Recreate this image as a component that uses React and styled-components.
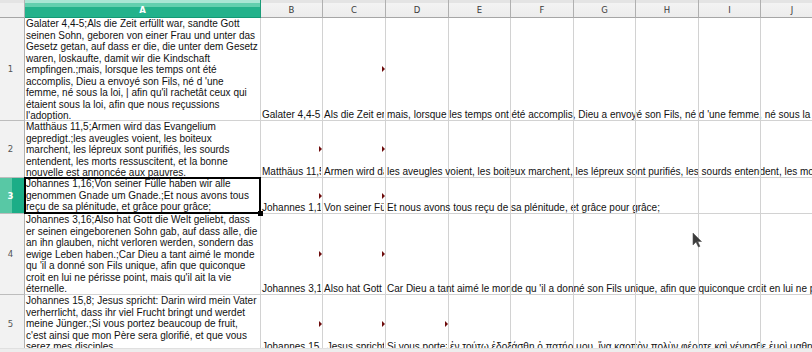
import React from "react";
import styled, { createGlobalStyle, css } from "styled-components";

const Global = createGlobalStyle`
  html, body { margin: 0; padding: 0; background: #fff; overflow: hidden; }
  #root { width: 812px; height: 352px; }
`;

const COLS = [
  { key: "A", w: 236 },
  { key: "B", w: 62 },
  { key: "C", w: 63 },
  { key: "D", w: 63 },
  { key: "E", w: 62 },
  { key: "F", w: 63 },
  { key: "G", w: 62 },
  { key: "H", w: 63 },
  { key: "I", w: 62 },
  { key: "J", w: 63 },
];

const ROWS = [
  {
    n: 1,
    h: 103,
    lines: [
      "Galater 4,4-5;Als die Zeit erfüllt war, sandte Gott",
      "seinen Sohn, geboren von einer Frau und unter das",
      "Gesetz getan, auf dass er die, die unter dem Gesetz",
      "waren, loskaufte, damit wir die Kindschaft",
      "empfingen.;mais, lorsque les temps ont été",
      "accomplis, Dieu a envoyé son Fils, né d 'une",
      "femme, né sous la loi, | afin qu'il rachetât ceux qui",
      "étaient sous la loi, afin que nous reçussions",
      "l'adoption.",
    ],
    cells: {
      B: "Galater 4,4-5",
      C: "Als die Zeit erfüllt war, sandte Gott seinen Sohn",
      D: "mais, lorsque les temps ont été accomplis, Dieu a envoyé son Fils, né d 'une femme, né sous la loi, | afin qu'il rachetât ceux qui étaient sous la loi",
    },
    marks: ["C"],
  },
  {
    n: 2,
    h: 57,
    lines: [
      "Matthäus 11,5;Armen wird das Evangelium",
      "gepredigt.;les aveugles voient, les boiteux",
      "marchent, les lépreux sont purifiés, les sourds",
      "entendent, les morts ressuscitent, et la bonne",
      "nouvelle est annoncée aux pauvres.",
    ],
    cells: {
      B: "Matthäus 11,5",
      C: "Armen wird das Evangelium gepredigt.",
      D: "les aveugles voient, les boiteux marchent, les lépreux sont purifiés, les sourds entendent, les morts ressuscitent, et la bonne nouvelle",
    },
    marks: ["B", "C"],
  },
  {
    n: 3,
    h: 36,
    selected: true,
    lines: [
      "Johannes 1,16;Von seiner Fülle haben wir alle",
      "genommen Gnade um Gnade.;Et nous avons tous",
      "reçu de sa plénitude, et grâce pour grâce;",
    ],
    cells: {
      B: "Johannes 1,16",
      C: "Von seiner Fülle haben wir alle genommen",
      D: "Et nous avons tous reçu de sa plénitude, et grâce pour grâce;",
    },
    marks: ["B", "C"],
  },
  {
    n: 4,
    h: 81,
    lines: [
      "Johannes 3,16;Also hat Gott die Welt geliebt, dass",
      "er seinen eingeborenen Sohn gab, auf dass alle, die",
      "an ihn glauben, nicht verloren werden, sondern das",
      "ewige Leben haben.;Car Dieu a tant aimé le monde",
      "qu 'il a donné son Fils unique, afin que quiconque",
      "croit en lui ne périsse point, mais qu'il ait la vie",
      "éternelle.",
    ],
    cells: {
      B: "Johannes 3,16",
      C: "Also hat Gott die Welt geliebt",
      D: "Car Dieu a tant aimé le monde qu 'il a donné son Fils unique, afin que quiconque croit en lui ne périsse point, mais qu'il ait la vie éternelle.",
    },
    marks: ["B", "C"],
  },
  {
    n: 5,
    h: 58,
    lines: [
      "Johannes 15,8; Jesus spricht: Darin wird mein Vater",
      "verherrlicht, dass ihr viel Frucht bringt und werdet",
      "meine Jünger.;Si vous portez beaucoup de fruit,",
      "c'est ainsi que mon Père sera glorifié, et que vous",
      "serez mes disciples.",
    ],
    cells: {
      B: "Johannes 15,8",
      C: " Jesus spricht: Darin wird mein Vater",
      D: "Si vous portez beaucoup de fruit",
      E: "ἐν τούτῳ ἐδοξάσθη ὁ πατήρ μου, ἵνα καρπὸν πολὺν φέρητε καὶ γένησθε ἐμοὶ μαθηταί.",
    },
    marks: ["B", "C", "D"],
  },
];

const Frame = styled.div`
  width: 812px;
  height: 352px;
  display: flex;
  flex-direction: column;
  overflow: hidden;
  position: relative;
  font-family: "Liberation Sans", Arial, sans-serif;
  color: #111;
`;

const Sheet = styled.div`
  flex: 1;
  min-height: 0;
  overflow: hidden;
  display: flex;
  flex-direction: column;
`;

const HeaderRow = styled.div`
  display: flex;
  height: 18px;
  flex: none;
`;

const Corner = styled.div`
  width: 25px;
  flex: none;
  box-sizing: border-box;
  border-right: 1px solid #b4b4b4;
  border-bottom: 1px solid #a6a6a6;
  background: linear-gradient(#e4e4e4 0 3px, #efefef 3px);
`;

const ColHeader = styled.div`
  width: ${(p) => p.$w}px;
  flex: none;
  box-sizing: border-box;
  border-right: 1px solid #b0b0b0;
  border-bottom: 1px solid #a6a6a6;
  display: flex;
  align-items: center;
  justify-content: center;
  padding-top: 3px;
  font-family: "DejaVu Sans", sans-serif;
  font-size: 8.5px;
  color: #3a3a3a;
  background: linear-gradient(#e4e4e4 0 3px, #f3f3f3 3px, #ececec);
  ${(p) =>
    p.$active &&
    css`
      color: #fff;
      font-weight: bold;
      border-right-color: #1a9c78;
      border-bottom-color: #139a75;
      background: linear-gradient(#a9e6d4 0 3px, #62cfae 3px 7px, #23b28b 7px);
    `}
`;

const Row = styled.div`
  display: flex;
  height: ${(p) => p.$h}px;
  flex: none;
`;

const RowHeader = styled.div`
  width: 25px;
  flex: none;
  box-sizing: border-box;
  border-right: 1px solid #b0b0b0;
  border-bottom: 1px solid #bdbdbd;
  display: flex;
  align-items: center;
  justify-content: center;
  padding-right: 3px;
  font-family: "DejaVu Sans", sans-serif;
  font-size: 8.5px;
  color: #555;
  background: #f2f2f2;
  ${(p) =>
    p.$active &&
    css`
      color: #fff;
      font-weight: bold;
      border-right-color: #139a75;
      background: linear-gradient(to right, #58c8a5 0 12px, #1cad87 12px);
    `}
`;

const Cell = styled.div`
  width: ${(p) => p.$w}px;
  flex: none;
  box-sizing: border-box;
  border-right: 1px solid #d2d2d2;
  border-bottom: 1px solid #d2d2d2;
  position: relative;
  display: flex;
  flex-direction: column;
  justify-content: ${(p) => (p.$top ? "flex-start" : "flex-end")};
  font-size: 10px;
  line-height: 11.5px;
`;

const Clip = styled.div`
  overflow: ${(p) => (p.$clip ? "hidden" : "visible")};
  margin-right: ${(p) => (p.$marked ? 1 : 0)}px;
`;

const Line = styled.div`
  white-space: pre;
  padding-left: 1px;
`;

const Mark = styled.span`
  position: absolute;
  right: 0;
  top: 50%;
  margin-top: -3px;
  width: 0;
  height: 0;
  border-left: 3px solid #6e0b0b;
  border-top: 3px solid transparent;
  border-bottom: 3px solid transparent;
`;

const Selection = styled.div`
  position: absolute;
  left: -1px;
  top: -1px;
  right: -1px;
  bottom: -1px;
  border: 2px solid #000;
  pointer-events: none;
  z-index: 3;
`;

const Handle = styled.div`
  position: absolute;
  right: -4px;
  bottom: -4px;
  width: 5px;
  height: 5px;
  background: #000;
`;

const BottomBar = styled.div`
  height: 3px;
  flex: none;
  background: #ededed;
  border-top: 1px solid #e0e0e0;
`;

const Cursor = styled.svg`
  position: absolute;
  left: 692px;
  top: 232px;
  z-index: 10;
`;

export default function App() {
  return (
    <Frame>
      <Global />
      <Sheet>
        <HeaderRow>
          <Corner />
          {COLS.map((c) => (
            <ColHeader key={c.key} $w={c.w} $active={c.key === "A"}>
              {c.key}
            </ColHeader>
          ))}
        </HeaderRow>
        {ROWS.map((r) => (
          <Row key={r.n} $h={r.h}>
            <RowHeader $active={r.selected}>{r.n}</RowHeader>
            {COLS.map((c, i) => {
              if (c.key === "A") {
                return (
                  <Cell key={c.key} $w={c.w} $top>
                    {r.lines.map((l, j) => (
                      <Line key={j}>{l}</Line>
                    ))}
                    {r.selected && (
                      <Selection>
                        <Handle />
                      </Selection>
                    )}
                  </Cell>
                );
              }
              const text = r.cells[c.key];
              const next = COLS[i + 1];
              const clip = !!(text && next && r.cells[next.key]);
              const marked = r.marks.includes(c.key);
              return (
                <Cell key={c.key} $w={c.w}>
                  {text && (
                    <Clip $clip={clip} $marked={marked}>
                      <Line>{text}</Line>
                    </Clip>
                  )}
                  {marked && <Mark />}
                </Cell>
              );
            })}
          </Row>
        ))}
      </Sheet>
      <BottomBar />
      <Cursor width="11" height="16" viewBox="0 0 11 16">
        <path d="M1 1 L1 13 L4 10 L6.5 15 L8 14.3 L5.6 9.5 L9.5 9.5 Z" fill="#3b3b3b" stroke="#555" strokeWidth="0.6" />
      </Cursor>
    </Frame>
  );
}
